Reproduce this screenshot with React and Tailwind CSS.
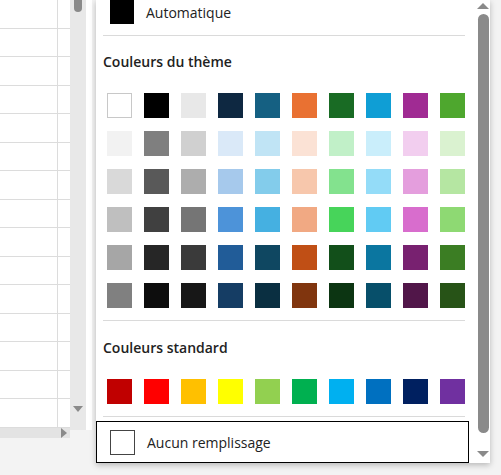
const theme = [
  ['#FFFFFF', '#000000', '#E8E8E8', '#0E2841', '#156082', '#E97132', '#196B24', '#0F9ED5', '#A02B93', '#4EA72E'],
  ['#F2F2F2', '#7F7F7F', '#D0D0D0', '#DAE9F8', '#C0E4F5', '#FBE2D5', '#C1F0C8', '#CAEEFB', '#F2CEEF', '#DAF2D0'],
  ['#D9D9D9', '#595959', '#ADADAD', '#A6C9EC', '#83CCEB', '#F7C7AC', '#83E28E', '#94DCF8', '#E49EDD', '#B5E6A2'],
  ['#BFBFBF', '#404040', '#757575', '#4D93D9', '#45B0E1', '#F1A983', '#47D45A', '#61CBF3', '#D86DCD', '#8ED973'],
  ['#A6A6A6', '#262626', '#3A3A3A', '#215C98', '#0F4761', '#C04F15', '#124F1A', '#0B76A0', '#782170', '#3B7D23'],
  ['#808080', '#0D0D0D', '#171717', '#153D64', '#0A2F41', '#80350E', '#0C3512', '#074F6A', '#511649', '#275317'],
]
const standard = ['#C00000', '#FF0000', '#FFC000', '#FFFF00', '#92D050', '#00B050', '#00B0F0', '#0070C0', '#002060', '#7030A0']

const Swatch = ({ c }) => (
  <div
    className={'w-[25px] h-[25px] ' + (c === '#FFFFFF' ? 'border border-[#c8c8c8]' : '')}
    style={{ background: c }}
  />
)

export default function App() {
  return (
    <div className="relative w-[501px] h-[475px] bg-[#f3f3f3] overflow-hidden" style={{ fontFamily: '"Open Sans", "Noto Sans", sans-serif' }}>
      {/* sheet */}
      <div className="flex h-[430px]">
        <div className="w-[70px] bg-white flex flex-col">
          <div className="flex-1 flex flex-col">
            {Array.from({ length: 15 }).map((_, i) => (
              <div key={i} className="h-[28.5px] border-b border-[#dcdcdc] flex">
                <div className="w-[58px] border-r border-[#dcdcdc]" />
              </div>
            ))}
          </div>
          <div className="h-[16px] bg-[#e3e3e3] flex justify-end items-center pr-[3px]">
            <div className="w-0 h-0 border-y-[5px] border-y-transparent border-l-[6px] border-l-[#8a8a8a]" />
          </div>
        </div>
        <div className="w-[16px] bg-[#e8e8e8] flex flex-col items-center justify-between py-[2px]">
          <div className="w-[8px] h-[12px] bg-[#8a8a8a] rounded-b-full -mt-[2px]" />
          <div className="w-0 h-0 border-x-[5px] border-x-transparent border-t-[6px] border-t-[#8a8a8a] mb-[16px]" />
        </div>
        <div className="w-[6px] bg-white" />
      </div>

      {/* dropdown panel */}
      <div className="absolute left-[96px] top-0 w-[394px] h-[463px] bg-white shadow-[0_2px_6px_rgba(0,0,0,0.25)] flex">
        <div className="flex-1 flex flex-col pl-[7px] pr-[12px]">
          <div className="flex items-center h-[24px] pl-[7px] gap-[12px]">
            <div className="w-[24px] h-[24px] bg-black" />
            <span className="text-[14px] text-[#222]">Automatique</span>
          </div>
          <div className="h-px bg-[#dadada] mt-[11px] mx-[0px]" />
          <div className="text-[14px] font-semibold text-[#222] mt-[16px] leading-[20px]">Couleurs du thème</div>
          <div className="flex flex-col gap-[13px] mt-[21px] pl-[4px]">
            {theme.map((row, i) => (
              <div key={i} className="flex gap-[12px]">
                {row.map((c, j) => <Swatch key={j} c={c} />)}
              </div>
            ))}
          </div>
          <div className="h-px bg-[#dadada] mt-[12px]" />
          <div className="text-[14px] font-semibold text-[#222] mt-[17px] leading-[20px]">Couleurs standard</div>
          <div className="flex gap-[12px] mt-[21px] pl-[4px]">
            {standard.map((c, j) => <Swatch key={j} c={c} />)}
          </div>
          <div className="h-px bg-[#dadada] mt-[12px]" />
        </div>
        <div className="w-[14px] mr-[4px] flex flex-col items-center pt-[3px] pb-[6px]">
          <div className="w-0 h-0 border-x-[6px] border-x-transparent border-b-[6px] border-b-[#8a8a8a]" />
          <div className="w-[11px] flex-1 bg-[#8a8a8a] rounded-full mt-[5px] mb-[18px]" />
          <div className="w-0 h-0 border-x-[6px] border-x-transparent border-t-[6px] border-t-[#8a8a8a]" />
        </div>
      </div>
      <div className="absolute left-[96px] top-[421px] w-[373px] h-[42px] border border-black bg-white flex items-center pl-[13px] gap-[12px]">
        <div className="w-[25px] h-[25px] border border-[#444]" />
        <span className="text-[14px] text-[#222]">Aucun remplissage</span>
      </div>
    </div>
  )
}
